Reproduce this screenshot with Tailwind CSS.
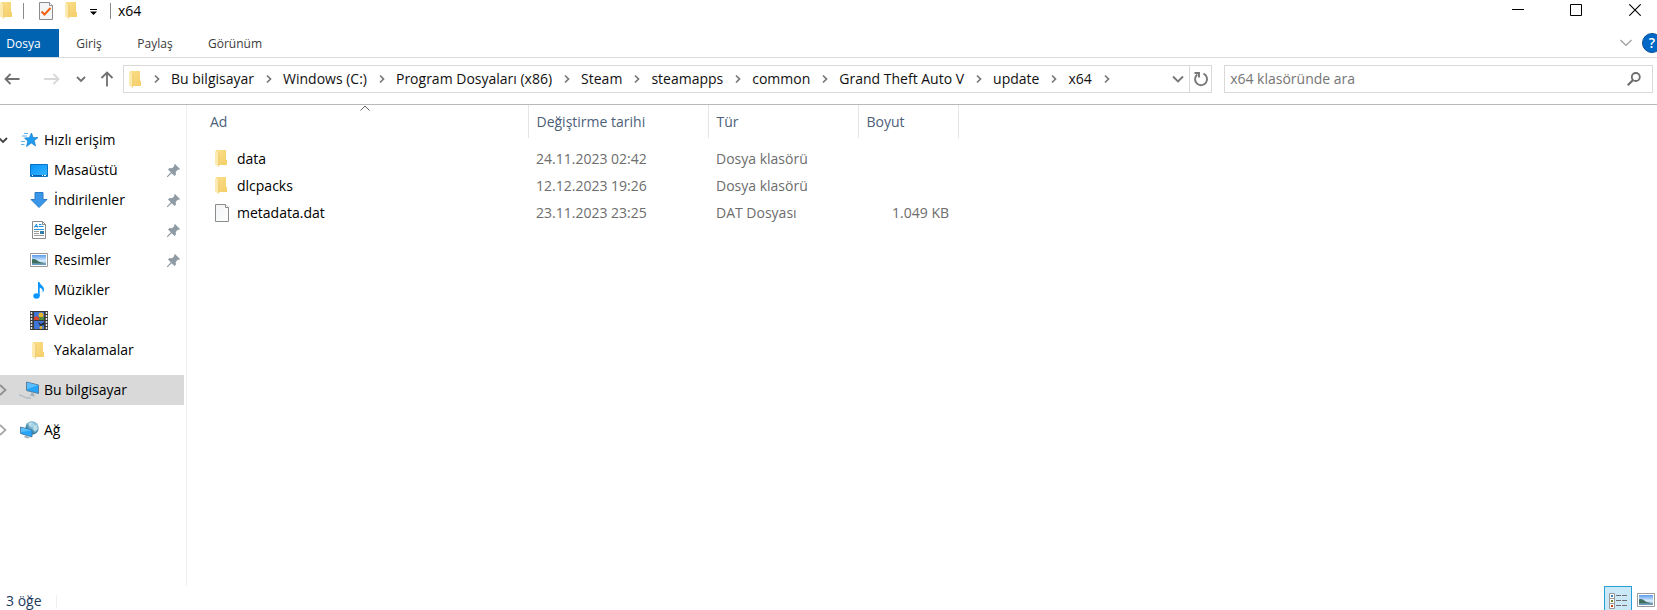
<!DOCTYPE html>
<html lang="tr">
<head>
    <meta charset="UTF-8">
    <meta name="viewport" content="width=device-width, initial-scale=1.0">
    <title>x64</title>
    <script src="https://cdn.jsdelivr.net/npm/@tailwindcss/browser@4"></script>
</head>
<body class="h-screen flex flex-col overflow-hidden bg-white text-black text-[14px] leading-5 font-['Open_Sans','Noto_Sans',sans-serif]">

    <!-- Shared icons -->
    <svg class="absolute size-0" aria-hidden="true">
        <defs>
            <linearGradient id="folderFill" x1="0" y1="0" x2="1" y2="1">
                <stop offset="0" stop-color="#fae08d"/>
                <stop offset="1" stop-color="#f4cc66"/>
            </linearGradient>
            <linearGradient id="screenFill" x1="0" y1="0" x2="1" y2="1">
                <stop offset="0" stop-color="#0b93f5"/>
                <stop offset="0.5" stop-color="#1fa5ff"/>
                <stop offset="1" stop-color="#38b6ff"/>
            </linearGradient>
            <linearGradient id="skyFill" x1="0" y1="0" x2="0" y2="1">
                <stop offset="0" stop-color="#5b9bea"/>
                <stop offset="0.6" stop-color="#dcefff"/>
                <stop offset="1" stop-color="#5b8fb8"/>
            </linearGradient>
            <linearGradient id="pageFill" x1="0" y1="0" x2="1" y2="1">
                <stop offset="0" stop-color="#f3f5f6"/>
                <stop offset="1" stop-color="#fdfdfd"/>
            </linearGradient>
            <radialGradient id="globeFill" cx="0.6" cy="0.3" r="0.8">
                <stop offset="0" stop-color="#b4dbea"/>
                <stop offset="0.6" stop-color="#4a93b5"/>
                <stop offset="1" stop-color="#2b6c90"/>
            </radialGradient>
        </defs>
        <symbol id="folder" viewBox="0 0 12 17">
            <path d="M1 0h10v10h1v5H3z" fill="url(#folderFill)"/>
            <path d="M10 10h2v5h-2z" fill="#f6d16e"/>
            <path d="M0 1l3.500 1.500V17L0 14.500z" fill="#fdeab0"/>
            <path d="M3.500 2.500h.7V16l-.7 1z" fill="#e9c160"/>
        </symbol>
        <symbol id="chevron" viewBox="0 0 8 10">
            <path d="M2 1.500L5.500 5 2 8.500" fill="none" stroke="currentColor" stroke-width="1.700"/>
        </symbol>
        <symbol id="pin" viewBox="0 0 13 13">
            <path d="M8 0l5 5-1 1-1-.4-2.300 2.300.3 2.600-1.500 1.500-2.800-2.800L.8 13H0v-.8l3.800-3.900L1 5.500 2.500 4l2.600.3L7.400 2 7 1z" fill="#8f9ba4"/>
        </symbol>
        <symbol id="photo" viewBox="0 0 18 14">
            <path d="M.5.5h17v13H.5z" fill="#fff" stroke="#9a9a9a"/>
            <path d="M2 2h14v10H2z" fill="url(#skyFill)"/>
            <path d="M2 6.500c2-1 4 0 6 1.500s5 1.500 8 2.500H2z" fill="#3f6f5d"/>
        </symbol>
    </svg>

    <!-- Title bar -->
    <header class="h-[29px] shrink-0 flex items-start justify-between">
        <div class="flex items-center h-[21px]">
            <svg class="w-3 h-[17px]"><use href="#folder"/></svg>
            <span class="ml-[11px] w-px h-4 bg-[#8a8a8a]"></span>
            <button class="ml-[15px]" aria-label="Özellikler">
                <svg class="w-[14px] h-[18px]" viewBox="0 0 14 18">
                    <path d="M.5.5h10l3 3v14H.5z" fill="#f4f5f6" stroke="#8c8c8c"/>
                    <path d="M10.500.5v3h3" fill="#fff" stroke="#8c8c8c"/>
                    <path d="M2.500 9.500l3 3 6-6.500" fill="none" stroke="#f0610f" stroke-width="2"/>
                </svg>
            </button>
            <button class="ml-3" aria-label="Yeni klasör"><svg class="w-3 h-[17px]"><use href="#folder"/></svg></button>
            <button class="ml-[13px]" aria-label="Hızlı Erişim Araç Çubuğunu Özelleştir">
                <svg class="w-[7px] h-[6px] mt-[3px]" viewBox="0 0 7 6"><path d="M0 0h7v1H0zM0 2.500h7L3.500 6z"/></svg>
            </button>
            <span class="ml-[13px] w-px h-4 bg-[#8a8a8a]"></span>
            <h1 class="ml-[7px]">x64</h1>
        </div>
        <div class="flex h-5 -mr-2">
            <button class="w-[58px] flex items-center justify-center" aria-label="Simge durumuna küçült">
                <svg class="w-3 h-3" viewBox="0 0 12 12"><path d="M0 5h12v1H0z"/></svg>
            </button>
            <button class="w-[58px] flex items-center justify-center" aria-label="Ekranı kapla">
                <svg class="w-3 h-3" viewBox="0 0 12 12"><path d="M.5.5h11v11H.5z" fill="none" stroke="#000"/></svg>
            </button>
            <button class="w-[60px] flex items-center justify-center" aria-label="Kapat">
                <svg class="w-3 h-3" viewBox="0 0 12 12"><path d="M.3.3l11.400 11.400M11.700.3L.3 11.700" fill="none" stroke="#000" stroke-width="1.100"/></svg>
            </button>
        </div>
    </header>

    <!-- Ribbon tabs -->
    <div class="h-[29px] shrink-0 flex justify-between border-b border-[#dadbdc] text-[12px] text-[#3b3b3b]">
        <div class="flex">
            <button class="w-[59px] pt-px pr-3 bg-[#0063b1] text-white">Dosya</button>
            <button class="w-[60px] pt-px">Giriş</button>
            <button class="w-[72px] pt-px">Paylaş</button>
            <button class="w-[88px] pt-px">Görünüm</button>
        </div>
        <div class="flex items-center gap-[10px] -mr-[5px]">
            <button aria-label="Şeridi genişlet">
                <svg class="w-3 h-2" viewBox="0 0 12 8"><path d="M.5 1L6 6.500 11.500 1" fill="none" stroke="#9a9a9a" stroke-width="1.200"/></svg>
            </button>
            <button class="size-5 rounded-full bg-[#0068c6] border border-[#0a4f92] text-white text-[14px] leading-4 font-semibold" aria-label="Yardım">?</button>
        </div>
    </div>

    <!-- Navigation and address -->
    <div class="h-[47px] shrink-0 flex items-center border-b border-[#b9b9b9] pl-1 pr-1 pb-1">
        <div class="flex items-center w-[119px]">
            <button aria-label="Geri">
                <svg class="w-4 h-4" viewBox="0 0 16 16"><path d="M15.500 8H1.500M6.500 3l-5 5 5 5" fill="none" stroke="#707070" stroke-width="1.800"/></svg>
            </button>
            <button class="ml-6" aria-label="İleri" disabled>
                <svg class="w-4 h-4" viewBox="0 0 16 16"><path d="M0 8h14M9.500 3l5 5-5 5" fill="none" stroke="#d8d8d8" stroke-width="1.800"/></svg>
            </button>
            <button class="ml-4" aria-label="Son konumlar">
                <svg class="w-[10px] h-2" viewBox="0 0 10 8"><path d="M1 2l4 4 4-4" fill="none" stroke="#707070" stroke-width="1.800"/></svg>
            </button>
            <button class="ml-[13px]" aria-label="Yukarı">
                <svg class="w-4 h-4" viewBox="0 0 14 16"><path d="M7 15.500V2M1.500 7L7 1.500 12.500 7" fill="none" stroke="#707070" stroke-width="1.800"/></svg>
            </button>
        </div>
        <nav class="flex-[1090] h-7 flex items-center border border-[#d9d9d9] whitespace-nowrap text-[#111]" aria-label="Adres">
            <svg class="ml-[5px] mr-3 w-3 h-[17px]"><use href="#folder"/></svg>
            <ol id="breadcrumb" class="flex items-center"></ol>
            <button class="ml-auto w-[23px] flex justify-center" aria-label="Önceki konumlar">
                <svg class="w-3 h-2" viewBox="0 0 12 8"><path d="M1 1.500l5 5 5-5" fill="none" stroke="#777" stroke-width="1.900"/></svg>
            </button>
            <button class="w-[22px] h-full flex items-center justify-center border-l border-[#d9d9d9]" aria-label="Yenile">
                <svg class="w-4 h-4" viewBox="0 0 16 16">
                    <path d="M10.500 2.700a6 6 0 1 1-6.200.8" fill="none" stroke="#777" stroke-width="1.900"/>
                    <path d="M1.500 2h4.500v4.500" fill="none" stroke="#777" stroke-width="1.900"/>
                </svg>
            </button>
        </nav>
        <label class="ml-3 flex-[428] h-7 flex items-center border border-[#d9d9d9]">
            <input type="text" class="grow min-w-0 pl-[5px] outline-none placeholder:text-[#757575]" placeholder="x64 klasöründe ara" aria-label="x64 klasöründe ara">
            <svg class="mr-[11px] w-[14px] h-[14px]" viewBox="0 0 14 14">
                <circle cx="8.800" cy="5" r="4" fill="none" stroke="#6e6e6e" stroke-width="1.800"/>
                <path d="M6 8L.8 13.200" stroke="#6e6e6e" stroke-width="2.200"/>
            </svg>
        </label>
    </div>

    <div class="flex grow min-h-0">
        <!-- Navigation pane -->
        <nav class="w-[187px] shrink-0 border-r border-[#f0f0f0] pt-5 pr-[2px] overflow-hidden" aria-label="Gezinti bölmesi">
            <a href="#" class="flex items-center h-[30px]">
                <svg class="-ml-[2px] mr-[13px] w-[10px] h-2" viewBox="0 0 10 8"><path d="M1 2l4 4 4-4" fill="none" stroke="#404040" stroke-width="1.800"/></svg>
                <svg class="mr-[5px] w-[18px] h-[16px]" viewBox="0 0 18 16">
                    <path d="M10.500 1l1.600 4.600H17l-3.800 3L14.600 14 10.300 11 5.500 14.600l1.300-5.400L3.500 6l4.800-.3z" fill="#1f9cf0" stroke="#147cc8" stroke-width=".7"/>
                    <path d="M3 1.500h4M1 4h5M0 9.500h4M0 12.500h3.500" stroke="#5cb4ee" stroke-width="1"/>
                </svg>
                Hızlı erişim
            </a>
            <a href="#" class="flex items-center h-[30px] pl-[30px] pr-1">
                <svg class="mr-[6px] w-[18px] h-[13px]" viewBox="0 0 18 13">
                    <path d="M.5.5h17v12H.5z" fill="url(#screenFill)" stroke="#0a74c4"/>
                    <path d="M1 11h16v1H1z" fill="#0b5fae"/>
                    <path d="M2 11h1v1H2zM12 11h1v1h-1zM14 11h2v1h-2z" fill="#fff"/>
                </svg>
                Masaüstü
                <svg class="ml-auto w-[13px] h-[13px]"><use href="#pin"/></svg>
            </a>
            <a href="#" class="flex items-center h-[30px] pl-[30px] pr-1">
                <svg class="mr-[6px] w-[18px] h-4" viewBox="0 0 18 16"><path d="M5 .5h8v7h4L9 15.500 1 7.500h4z" fill="#3a96e8" stroke="#2a7ccb"/></svg>
                İndirilenler
                <svg class="ml-auto w-[13px] h-[13px]"><use href="#pin"/></svg>
            </a>
            <a href="#" class="flex items-center h-[30px] pl-[30px] pr-1">
                <svg class="mr-[6px] w-[18px] h-[18px]" viewBox="0 0 18 18">
                    <path d="M2.500.5h10l3 3v14h-13z" fill="#fff" stroke="#8a8a8a"/>
                    <path d="M12.500.5v3h3" fill="none" stroke="#8a8a8a"/>
                    <path d="M4.500 6.500L6.500 3l1 3.500M4.500 5.500h3M9 3.500h2.500M8.500 5.500h5M4 8.500h10" fill="none" stroke="#1f8fe0"/>
                    <path d="M4 10.500h5M4 12.500h5M4 14.500h10" stroke="#9b9b9b"/>
                    <path d="M10 10h4v3h-4z" fill="#2f7fae"/>
                </svg>
                Belgeler
                <svg class="ml-auto w-[13px] h-[13px]"><use href="#pin"/></svg>
            </a>
            <a href="#" class="flex items-center h-[30px] pl-[30px] pr-1">
                <svg class="mr-[6px] w-[18px] h-[14px]"><use href="#photo"/></svg>
                Resimler
                <svg class="ml-auto w-[13px] h-[13px]"><use href="#pin"/></svg>
            </a>
            <a href="#" class="flex items-center h-[30px] pl-[30px] pr-1">
                <svg class="mr-[6px] w-[18px] h-[17px]" viewBox="0 0 18 17">
                    <ellipse cx="6.500" cy="14" rx="3.200" ry="2.700" fill="#0a95ff"/>
                    <path d="M8 0h1.500c.3 3 5 4 4.500 8-.2 1.200-.7 2-1.300 2.700.5-3-1-4.500-3-5.200V14H8z" fill="#0a95ff"/>
                </svg>
                Müzikler
            </a>
            <a href="#" class="flex items-center h-[30px] pl-[30px] pr-1">
                <svg class="mr-[6px] w-[18px] h-[19px]" viewBox="0 0 18 19">
                    <path d="M0 0h18v19H0z" fill="#3a3a3a"/>
                    <path d="M1.500 1v18M16.500 1v18" stroke="#e8e8e8" stroke-width="1.500" stroke-dasharray="2 1"/>
                    <path d="M4 1h10v8H4zM4 10h10v8H4z" fill="#3f74d8"/>
                    <path d="M4 6l3-1 2 2v2H4z" fill="#d8452f"/>
                    <circle cx="11" cy="4" r="2.500" fill="#e8b52a"/>
                    <path d="M9 6h5v3H9z" fill="#4d8a3a"/>
                    <path d="M8 11l3 2 3-2v3l-4 1z" fill="#222b3a"/>
                    <circle cx="11" cy="16.500" r="1.500" fill="#e8b52a"/>
                </svg>
                Videolar
            </a>
            <a href="#" class="flex items-center h-[30px] pl-[32px] pr-1">
                <svg class="mr-[10px] w-3 h-[17px]"><use href="#folder"/></svg>
                Yakalamalar
            </a>
            <a href="#" class="mt-[10px] flex items-center h-[30px] bg-[#d9d9d9]" aria-current="true">
                <svg class="mr-[12px] w-[7px] h-3" viewBox="0 0 7 12"><path d="M0 1l5.500 5L0 11" fill="none" stroke="#8f8f8f" stroke-width="1.700"/></svg>
                <svg class="mr-[5px] w-[20px] h-[18px]" viewBox="0 0 20 18">
                    <path d="M7.500 1l12 3v8.500l-12-3z" fill="#27a5fb" stroke="#4d6f88" stroke-width=".8"/>
                    <path d="M8 1.500l11 2.800-11 4z" fill="#5cbffd"/>
                    <path d="M12 11l3 .8v2.400l2 .8-3 .5-4-1.500 2-.6z" fill="#a5b2bc"/>
                    <path d="M0 13.500l8 3.500 4 0" fill="none" stroke="#b3bcc5" stroke-width="1.300"/>
                </svg>
                Bu bilgisayar
            </a>
            <a href="#" class="mt-[10px] flex items-center h-[30px]">
                <svg class="mr-[13px] w-[7px] h-3" viewBox="0 0 7 12"><path d="M0 1l5.500 5L0 11" fill="none" stroke="#a6a6a6" stroke-width="1.700"/></svg>
                <svg class="mr-[5px] w-[19px] h-[18px]" viewBox="0 0 19 18">
                    <circle cx="12" cy="7" r="6.700" fill="url(#globeFill)"/>
                    <path d="M8 2c2-1 4-1 5 0l-2 2 1 2-3-1zM14 5l3-1 1 4-3 3-2-3z" fill="#d6eef5" opacity=".7"/>
                    <path d="M.5 6l11.500 3v7L.5 12.500z" fill="#27a5fb" stroke="#3f6f90" stroke-width=".8"/>
                    <path d="M1 6.500l10.500 2.800L1 11z" fill="#5cbffd"/>
                    <path d="M5 14.500l3 1 2 1.500-3 .5-3-1.500z" fill="#a5b2bc"/>
                </svg>
                Ağ
            </a>
        </nav>

        <!-- File list -->
        <main class="grow pl-[15px]">
            <table class="table-fixed w-[756px] text-left text-[#6d6d6d]">
                <thead>
                    <tr class="h-[33px] text-[#4c607a]">
                        <th class="relative w-[326px] pl-2 font-normal border-r border-[#e5e5e5]">
                            Ad
                            <svg class="absolute top-0 left-1/2 -translate-x-1/2 w-[10px] h-[6px]" viewBox="0 0 10 6"><path d="M.5 5.500L5 1l4.500 4.500" fill="none" stroke="#666"/></svg>
                        </th>
                        <th class="w-[180px] pl-2 font-normal border-r border-[#e5e5e5]">Değiştirme tarihi</th>
                        <th class="w-[150px] pl-2 font-normal border-r border-[#e5e5e5]">Tür</th>
                        <th class="w-[100px] pl-2 font-normal border-r border-[#e5e5e5]">Boyut</th>
                    </tr>
                </thead>
                <tbody id="fileList" class="before:block before:h-[7px]"></tbody>
            </table>
        </main>
    </div>

    <!-- Status bar -->
    <footer class="h-6 shrink-0 flex items-stretch justify-between text-[#1e395b]">
        <div class="flex items-center pl-[6px] pt-[6px]">
            3 öğe
            <span class="ml-[14px] w-px h-[13px] bg-[#f0f0f0]"></span>
        </div>
        <div class="flex items-start gap-[5px] pr-[2px]">
            <button class="w-7 h-6 pt-[5px] flex justify-center border border-b-0 border-[#26a0da] bg-[#cbe8f6]" aria-label="Ayrıntılar">
                <svg class="w-[18px] h-[18px] shrink-0" viewBox="0 0 18 18">
                    <path d="M.5 1.500h5v5h-5zM.5 6.500h5v5h-5zM.5 11.500h5v5h-5z" fill="#fff" stroke="#9a9a9a"/>
                    <path d="M2 3h2v2H2z" fill="#3b7fb8"/>
                    <path d="M2 8h2v2H2z" fill="#6e8a2c"/>
                    <path d="M2 13h2v2H2z" fill="#c8421c"/>
                    <path d="M7 3.500h5M13 3.500h5M7 8.500h5M13 8.500h5M7 13.500h5M13 13.500h5" stroke="#707070"/>
                </svg>
            </button>
            <button class="pt-[7px]" aria-label="Büyük simgeler"><svg class="w-[18px] h-[14px]"><use href="#photo"/></svg></button>
        </div>
    </footer>

    <script>
        const path = ['Bu bilgisayar', 'Windows (C:)', 'Program Dosyaları (x86)', 'Steam', 'steamapps', 'common', 'Grand Theft Auto V', 'update', 'x64'];

        const files = [
            { name: 'data', date: '24.11.2023 02:42', type: 'Dosya klasörü', size: '' },
            { name: 'dlcpacks', date: '12.12.2023 19:26', type: 'Dosya klasörü', size: '' },
            { name: 'metadata.dat', date: '23.11.2023 23:25', type: 'DAT Dosyası', size: '1.049 KB' }
        ];

        const chevron = '<svg class="w-2 h-[10px] text-[#777]"><use href="#chevron"/></svg>';
        const folderIcon = '<svg class="w-3 h-[17px] mr-[10px]"><use href="#folder"/></svg>';
        const fileIcon = `
            <svg class="w-[14px] h-[18px] mr-2" viewBox="0 0 14 18">
                <path d="M.5.5h10l3 3v14H.5z" fill="url(#pageFill)" stroke="#8c8c8c"/>
                <path d="M10.500.5v3h3" fill="#fff" stroke="#8c8c8c"/>
            </svg>`;

        document.getElementById('breadcrumb').innerHTML = chevron + path.map(part => `
            <li class="flex items-center"><a href="#" class="pl-[10px] pr-[11px]">${part}</a>${chevron}</li>
        `).join('');

        document.getElementById('fileList').innerHTML = files.map(file => `
            <tr class="h-[27px]">
                <td class="pl-[13px] text-black">
                    <div class="flex items-center">${file.type === 'Dosya klasörü' ? folderIcon : fileIcon}${file.name}</div>
                </td>
                <td class="pl-2">${file.date}</td>
                <td class="pl-2">${file.type}</td>
                <td class="pr-[9px] text-right">${file.size}</td>
            </tr>
        `).join('');
    </script>
</body>
</html>
